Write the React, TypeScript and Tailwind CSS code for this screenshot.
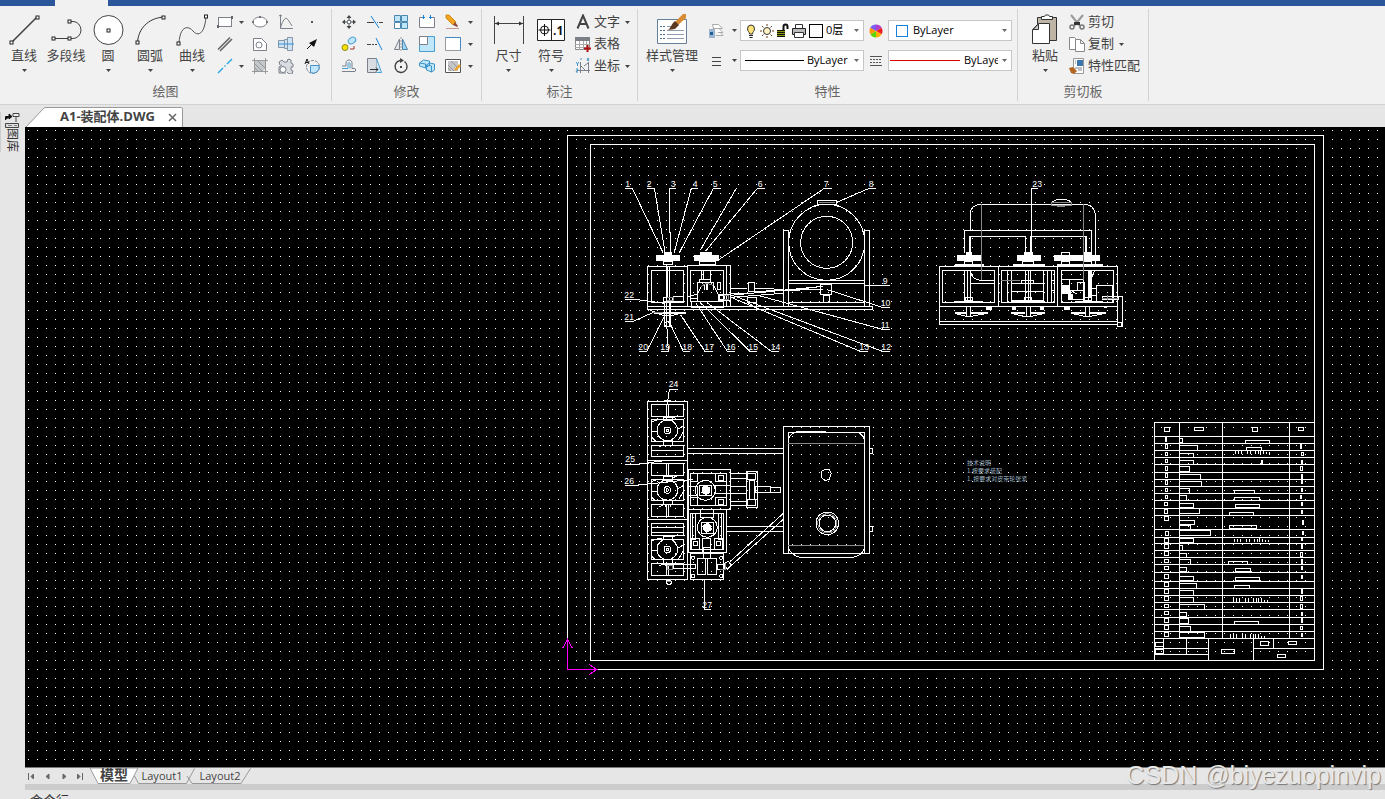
import { Fragment, type ReactNode } from "react";
import { clsx } from "clsx";

const UI_FONT = "font-['Open_Sans','Noto_Sans_CJK_SC',sans-serif]";

const GRID_STEP = 8.99;
const GRID_COLS = 220;
const GRID_ROWS = 120;

type Box = [x: number, y: number, w: number, h: number];
type Label = [text: string, x: number, y: number];

function Arrow({ className }: { className?: string }) {
  return (
    <svg viewBox="0 0 5 3" className={clsx("h-[3px] w-[5px] shrink-0", className)} aria-hidden>
      <path d="M0 0h5L2.5 3z" fill="#444" />
    </svg>
  );
}

function Node({ x, y }: { x: number; y: number }) {
  return <rect x={x - 1.5} y={y - 1.5} width="3" height="3" fill="#fff" stroke="#222" strokeWidth="1" />;
}

function Icon({ size = 16, children }: { size?: number; children: ReactNode }) {
  return (
    <svg
      width={size}
      height={size}
      viewBox={`0 0 ${size} ${size}`}
      fill="none"
      stroke="#7b808a"
      strokeWidth="1"
      className="shrink-0"
      aria-hidden
    >
      {children}
    </svg>
  );
}

type BigButtonProps = {
  label: string;
  icon: ReactNode;
  menu?: boolean;
  className: string;
};

function BigButton({ label, icon, menu = true, className }: BigButtonProps) {
  return (
    <button
      type="button"
      className={clsx("flex shrink-0 flex-col items-center pt-[3px] hover:bg-gray-200", className)}
    >
      <Icon size={32}>{icon}</Icon>
      <span className="text-[13px] leading-[18px] whitespace-nowrap">{label}</span>
      {menu && <Arrow className="mt-[5px]" />}
    </button>
  );
}

type Tool = { name: string; icon: ReactNode };

function ToolButton({ tool }: { tool: Tool }) {
  return (
    <button type="button" aria-label={tool.name} className="flex items-center justify-center hover:bg-gray-200">
      <Icon>{tool.icon}</Icon>
    </button>
  );
}

function MenuButton({ name }: { name: string }) {
  return (
    <button type="button" aria-label={name} className="flex items-center justify-center">
      <Arrow />
    </button>
  );
}

function TextButton({ tool, menu }: { tool: Tool; menu?: boolean }) {
  return (
    <button type="button" className="flex h-[22px] items-center gap-[3px] hover:bg-gray-200">
      <Icon>{tool.icon}</Icon>
      <span className="pb-0.5 text-[13px] leading-5 whitespace-nowrap">{tool.name}</span>
      {menu && <Arrow className="ml-0.5" />}
    </button>
  );
}

type GroupProps = { title: string; className: string; inset: string; children: ReactNode };

function Group({ title, className, inset, children }: GroupProps) {
  return (
    <section className={clsx("mt-[3px] flex h-[92px] shrink-0 flex-col border-r border-[#d2d2d2] pt-0.5", className)}>
      <div className={clsx("flex h-[66px]", inset)}>{children}</div>
      <h2 className="mt-1 text-center text-[13px] leading-5 text-[#666]">{title}</h2>
    </section>
  );
}

type ComboProps = { label: string; value: string; children?: ReactNode; gap: string };

function Combo({ label, value, children, gap }: ComboProps) {
  return (
    <div className={clsx("flex h-[21px] min-w-0 items-center border border-[#c6c6c6] bg-white pr-1", gap)}>
      {children}
      <select
        aria-label={label}
        defaultValue={value}
        className="h-full min-w-0 flex-1 appearance-none overflow-hidden text-[11px] text-black outline-none"
      >
        <option>{value}</option>
      </select>
      <Arrow className="ml-1 opacity-80" />
    </div>
  );
}

const TOOLS: Record<string, Tool> = {
  rect: {
    name: "矩形",
    icon: (
      <>
        <rect x="1.5" y="3.5" width="13" height="9" fill="#fff" />
        <path d="M0 11h2v3H0zM14 2h2v3h-2z" fill="#666" stroke="none" />
      </>
    ),
  },
  ellipse: {
    name: "椭圆",
    icon: (
      <>
        <ellipse cx="8" cy="8" rx="7" ry="5" fill="#fff" />
        <path d="M0 7h2v2H0zM14 7h2v2h-2zM7 2h2v2H7z" fill="#777" stroke="none" />
      </>
    ),
  },
  function: { name: "公式曲线", icon: <path d="M2.500 1v13.500H15M2.500 14C4 8 6 5 8 4c3 2 4 5 6 8M1 2l1.500-1L4 2" /> },
  point: { name: "点", icon: <path d="M7 7h2v2H7z" fill="#555" stroke="none" /> },
  parallel: { name: "平行线", icon: <path d="M1 13.500L13 1.500M3 15L15 3" strokeWidth="1.600" stroke="#666" /> },
  hole: {
    name: "孔",
    icon: (
      <>
        <path d="M1.500 2.500h8l5 5v7h-13z" fill="#fff" />
        <circle cx="7" cy="9" r="3" />
      </>
    ),
  },
  shaft: {
    name: "轴",
    icon: (
      <>
        <path d="M.5 4.500h6v-1h3v-2h5v13h-5v-2h-3v-1h-6zM6.500 4v8M9.500 3v10" fill="#cfe3f2" stroke="#8496a8" />
        <path d="M0 8h16" stroke="#3a94dc" />
      </>
    ),
  },
  leader: {
    name: "箭头",
    icon: (
      <>
        <path d="M3 13l7-7" stroke="#111" />
        <path d="M13 3l-3 8-5-4z" fill="#111" stroke="none" />
      </>
    ),
  },
  centerline: { name: "中心线", icon: <path d="M1 15L6 10M7.500 8.500l1-1M10 6l5-5" stroke="#22a5e0" strokeWidth="1.400" /> },
  hatch: {
    name: "剖面线",
    icon: (
      <>
        <path d="M3 3h11v7l-4 4H3z" fill="#c5c8cb" stroke="none" />
        <path d="M2.500 0v16M13.500 0v16M0 2.500h16M0 13.500h16M3 6l7 7M3 10l3 3M6 3l7 7" stroke="#888" strokeWidth="0.800" />
      </>
    ),
  },
  gear: {
    name: "齿轮",
    icon: (
      <>
        <path
          d="M2 7l-1-3 3-2 2 2h3l1-3 3 1v3l2 1v3h-2v3l2 1-1 3h-3l-2-2M8 15H1V9l3-2"
          fill="#d9dde2"
        />
        <circle cx="5" cy="11.500" r="3" fill="#fff" />
      </>
    ),
  },
  partial: {
    name: "局部放大",
    icon: (
      <>
        <circle cx="9" cy="9" r="6.500" strokeDasharray="3 1" />
        <path d="M6.500 7.500h8.500a6 6 0 0 1-8.500 7z" fill="#bfe6fa" stroke="#4a92c4" />
        <path d="M1 6l2-5 2 5M2 4.500h2" stroke="#111" />
      </>
    ),
  },
  move: {
    name: "移动",
    icon: (
      <>
        <rect x="6.500" y="6.500" width="3" height="3" fill="#fff" />
        <path d="M8 1l2.500 3h-5zM8 15l2.500-3h-5zM1 8l3-2.500v5zM15 8l-3-2.500v5z" fill="#444" stroke="none" />
        <path d="M8 3v3M8 10v3M3 8h3M10 8h3" stroke="#444" />
      </>
    ),
  },
  trim: {
    name: "裁剪",
    icon: (
      <>
        <path d="M0 8.500h7M12 8.500h4" stroke="#444" />
        <path d="M4 2l8 12" stroke="#1683d9" />
        <path d="M8 8.500h4" stroke="#1683d9" strokeDasharray="1 1" />
      </>
    ),
  },
  array: {
    name: "阵列",
    icon: (
      <g stroke="#4b87ae">
        <path d="M1.500 1.500h6v6h-6zM8.500 1.500h6v6h-6zM8.500 8.500h6v6h-6z" fill="#bfe6fa" />
        <path d="M1.500 8.500h6v6h-6z" fill="#fff" />
      </g>
    ),
  },
  breakAt: {
    name: "打断",
    icon: (
      <>
        <path d="M4 3.500H.5v10h15v-10H12" fill="#fff" />
        <path d="M4.500 1v4M11.500 1v4" stroke="#1683d9" />
        <path d="M3 3.500h3M10 3.500h3" stroke="#1683d9" />
      </>
    ),
  },
  erase: {
    name: "删除",
    icon: (
      <>
        <path d="M1 14.500h13" stroke="#c09a90" />
        <path d="M1 1l3 0 7 7-3 3-7-7z" fill="#f3a521" stroke="#d48a14" />
        <path d="M10 8l3 4-1 1-4-2z" fill="#8f4b3f" stroke="none" />
      </>
    ),
  },
  copy: {
    name: "平移复制",
    icon: (
      <>
        <ellipse cx="11" cy="4.500" rx="4" ry="3" fill="#bfe6fa" stroke="#4b9fd0" transform="rotate(-35 11 4.500)" />
        <circle cx="4" cy="11.500" r="3" fill="#fce100" stroke="#888a2a" />
        <path d="M9 13h4v-3" stroke="#a2342a" />
      </>
    ),
  },
  extend: {
    name: "延伸",
    icon: (
      <>
        <path d="M0 8.500h4" stroke="#444" />
        <path d="M5 8.500h6" stroke="#444" strokeDasharray="2 1" />
        <path d="M9 2l6 12" stroke="#1683d9" />
      </>
    ),
  },
  mirror: {
    name: "镜像",
    icon: (
      <>
        <path d="M6.500 3v10.500h-5z" fill="#e5e7ea" />
        <path d="M9.500 3v10.500h5z" fill="#9fd4f2" stroke="#4b87ae" />
        <path d="M8 1v14" stroke="#999" strokeDasharray="2 1" />
      </>
    ),
  },
  scale: {
    name: "缩放",
    icon: (
      <>
        <path d="M.5 .5h15v15h-15z" fill="#bfe6fa" stroke="#4b9fd0" />
        <path d="M.5 .5h8v8h-8z" fill="#fff" />
      </>
    ),
  },
  frame: {
    name: "边框",
    icon: (
      <>
        <path d="M.5 1.500h15v13H.5z" fill="#fff" stroke="#999" />
        <path d="M.5 1.500h15v13" stroke="#1683d9" strokeDasharray="2 1" />
      </>
    ),
  },
  offset: {
    name: "等距",
    icon: (
      <>
        <path d="M1 13.500h13q1.500-1.500 0-3h-3V5c0-4-6-4-6 0v3H1" />
        <path d="M1 10.500h6V6c0-2 2-2 2 0v4.500" stroke="#4b9fd0" />
      </>
    ),
  },
  stretch: {
    name: "拉伸",
    icon: (
      <>
        <path d="M.5 .5h9v14h-9z" fill="#d9dde2" />
        <path d="M9.500 .5l5 14h-5" fill="#d3ecfa" stroke="#4b9fd0" />
        <path d="M3 11.500h8M9 9.500l2 2-2 2" stroke="#333" />
      </>
    ),
  },
  rotate: {
    name: "旋转",
    icon: (
      <>
        <path d="M7 2.500a6 6 0 1 0 4.500 1" stroke="#444" strokeWidth="1.400" />
        <path d="M7 0v5l4-2.500z" fill="#444" stroke="none" />
        <path d="M7 8h2v2H7z" fill="#444" stroke="none" />
      </>
    ),
  },
  solid: {
    name: "拉伸体",
    icon: (
      <g stroke="#3e93c6" fill="#bfe6fa">
        <path d="M.5 5l4-3 6 1v4l-4 3-6-2zM7.500 7l3-2 5 1v6l-3 2-5-2zM7.500 7l5 1v6M.5 5l6 1v4" />
      </g>
    ),
  },
  editHatch: {
    name: "编辑剖面线",
    icon: (
      <>
        <path d="M.5 1.500h15v13H.5z" fill="#fff" stroke="#555" />
        <path d="M3 3h10v10H3z" fill="#c3c5c8" stroke="none" />
        <path d="M3 7l6 6M6 3l7 7M3 10l3 3" stroke="#999" />
        <path d="M9 12l5-6 2 2-5 5z" fill="#e9a52c" stroke="none" />
      </>
    ),
  },
  text: { name: "文字", icon: <path d="M2.500 14.500L8 1.500l5.500 13M4.500 10h7" stroke="#444" strokeWidth="2" /> },
  table: {
    name: "表格",
    icon: (
      <>
        <path d="M.5 1.500h14v12H.5z" fill="#fff" stroke="#888" />
        <path d="M0 1h15v4H0z" fill="#7c7f86" stroke="none" />
        <path d="M4.500 5v9M8.500 5v9M11.500 5v9M0 8.500h15M0 11.500h15" stroke="#aaa" />
        <path d="M12.500 9v7M9 12.500h7" stroke="#b01010" strokeWidth="2" />
      </>
    ),
  },
  coord: {
    name: "坐标",
    icon: (
      <>
        <path d="M5.500 4v11M2 12.500h13M6 8l4 4M13.500 4v11M9 8l4-3" />
        <path d="M1 4l1.500 2L4 4M2.500 6v2M12 0l2 3M14 0l-2 3M1 11h2l-2 3h2M5 1h2" stroke="#3e93c6" />
      </>
    ),
  },
  cut: {
    name: "剪切",
    icon: (
      <>
        <path d="M2 1l9 11M14 1L5 12" stroke="#999" strokeWidth="2" />
        <path d="M5 8h6v3H5z" fill="#333" stroke="none" />
        <circle cx="3" cy="13" r="2" stroke="#777" strokeWidth="1.500" />
        <circle cx="13" cy="13" r="2" stroke="#777" strokeWidth="1.500" />
      </>
    ),
  },
  duplicate: {
    name: "复制",
    icon: (
      <>
        <path d="M.5 1.500h5l3 3v9h-8z" fill="#fff" stroke="#888" />
        <path d="M6.500 3.500h5l4 4v8h-9zM11.500 3.500v4h4" fill="#fff" stroke="#888" />
      </>
    ),
  },
  match: {
    name: "特性匹配",
    icon: (
      <>
        <path d="M4.500.5h10v15h-10z" fill="#fff" stroke="#999" />
        <path d="M8 2h6v6H8z" fill="#3b77ad" stroke="none" />
        <path d="M6 3h1M6 5h1M6 10h7M9 12h4" />
        <path d="M0 10l4-1 4 4-3 3-3-1z" fill="#b2651e" stroke="none" />
      </>
    ),
  },
};

const DRAW_ROWS: [string, boolean, string, string, string][] = [
  ["rect", true, "ellipse", "function", "point"],
  ["parallel", false, "hole", "shaft", "leader"],
  ["centerline", true, "hatch", "gear", "partial"],
];

const MODIFY_ROWS = [
  ["move", "trim", "array", "breakAt", "erase"],
  ["copy", "extend", "mirror", "scale", "frame"],
  ["offset", "stretch", "rotate", "solid", "editHatch"],
];

function Ribbon() {
  return (
    <header className="flex h-[99px] shrink-0 overflow-hidden border-b border-[#d2d2d2] bg-[#f1f1f1] text-[#444]">
      <Group title="绘图" className="w-[332px]" inset="pl-[3px]">
        <BigButton
          label="直线"
          className="w-[42px]"
          icon={
            <>
              <path d="M3 29L29 3" stroke="#444" strokeWidth="1.600" />
              <Node x={3.5} y={28.5} />
              <Node x={29.5} y={3.5} />
            </>
          }
        />
        <BigButton
          label="多段线"
          menu={false}
          className="w-[42px]"
          icon={
            <>
              <path d="M3 24.500h20a8 8.500 0 0 0 0-17h-4" stroke="#444" />
              <Node x={19.5} y={7.5} />
              <Node x={3.5} y={24.5} />
              <Node x={19.5} y={24.5} />
            </>
          }
        />
        <BigButton
          label="圆"
          className="w-[42px]"
          icon={
            <>
              <circle cx="16.500" cy="16" r="14.500" fill="#fff" stroke="#444" />
              <Node x={16.5} y={16.5} />
            </>
          }
        />
        <BigButton
          label="圆弧"
          className="w-[42px]"
          icon={
            <>
              <path d="M3.500 29C4 15 14 4 30 3" stroke="#333" />
              <Node x={3.5} y={28.5} />
              <Node x={29.5} y={3.5} />
            </>
          }
        />
        <BigButton
          label="曲线"
          className="w-[42px]"
          icon={
            <>
              <path d="M3 29C4 12 12 11 17 17s12 3 13-15" stroke="#555" />
              <Node x={2.5} y={29.5} />
              <Node x={30} y={2.5} />
            </>
          }
        />
        <div className="ml-px grid grid-cols-[22px_11px_26px_26px_26px] grid-rows-3">
          {DRAW_ROWS.map(([first, menu, ...rest]) => (
            <Fragment key={first}>
              <ToolButton tool={TOOLS[first]} />
              {menu ? <MenuButton name={`${TOOLS[first].name}菜单`} /> : <span />}
              {rest.map((id) => (
                <ToolButton key={id} tool={TOOLS[id]} />
              ))}
            </Fragment>
          ))}
        </div>
      </Group>

      <Group title="修改" className="w-[150px]" inset="pl-1">
        <div className="grid grid-cols-[26px_26px_26px_26px_26px_9px] grid-rows-3">
          {MODIFY_ROWS.map((row) => (
            <Fragment key={row[0]}>
              {row.map((id) => (
                <ToolButton key={id} tool={TOOLS[id]} />
              ))}
              <MenuButton name={`${TOOLS[row[4]].name}菜单`} />
            </Fragment>
          ))}
        </div>
      </Group>

      <Group title="标注" className="w-[156px]" inset="pl-[5px]">
        <BigButton
          label="尺寸"
          className="w-[43px]"
          icon={
            <g stroke="#444">
              <path d="M1.500 2v28M30.500 2v28M2 9.500h28" />
              <path d="M2 9.500l4-2v4zM30 9.500l-4-2v4z" fill="#333" stroke="none" />
            </g>
          }
        />
        <BigButton
          label="符号"
          className="w-[42px]"
          icon={
            <>
              <path d="M2.500 5.500h27v21h-27zM16.500 5v22" fill="#fff" stroke="#222" />
              <circle cx="9.500" cy="16" r="4" stroke="#111" />
              <path d="M9.500 10v12M3.500 16h12" stroke="#111" />
              <text x="18" y="21" fontSize="12" fontWeight="700" fill="#111" stroke="none" className={UI_FONT}>
                .1
              </text>
            </>
          }
        />
        <div className="ml-[3px] flex flex-col">
          <TextButton tool={TOOLS.text} menu />
          <TextButton tool={TOOLS.table} />
          <TextButton tool={TOOLS.coord} menu />
        </div>
      </Group>

      <Group title="特性" className="w-[380px]" inset="pl-[3px]">
        <BigButton
          label="样式管理"
          className="w-[62px]"
          icon={
            <>
              <path d="M1.500 5.500h29v24h-29z" fill="#fff" stroke="#667f99" />
              <path d="M4 12.500h5M4 16.500h5M4 20.500h5M4 24.500h5" stroke="#4e6c90" strokeDasharray="2 1" />
              <path d="M11 12.500h6M11 16.500h17M11 20.500h17M11 24.500h17" stroke="#8d9cae" />
              <path d="M27 0h3v4l-8 7-3-3z" fill="#d98b34" stroke="none" />
              <path d="M19 7l4 4-4 4-7 1c3-2 3-6 7-9z" fill="#5c3a22" stroke="none" />
            </>
          }
        />
        <div className="grid flex-1 grid-cols-[26px_11px_1fr_24px_1fr] grid-rows-[21px_21px] gap-y-[9px] pt-[9px] pr-[5px]">
          <ToolButton
            tool={{
              name: "图层",
              icon: (
                <>
                  <path d="M5.500 5.500l-1-4h6l4 4h-5M6 8.500l-1-3h6l4 4h-5M8 12.500h7l-3-3" fill="#fff" stroke="#aaa" />
                  <path d="M1 6h6v9H1z" fill="#9db6cd" stroke="none" />
                  <path d="M2 9h3v3H2z" fill="#1e5f9a" stroke="none" />
                </>
              ),
            }}
          />
          <MenuButton name="图层菜单" />
          <Combo label="图层" value="0层" gap="pl-[2px]">
            <Icon>
              <path d="M4.500 6a3.500 4 0 0 1 7 0c0 2-2 3-2 5h-3c0-2-2-3-2-5z" fill="#ffe27a" stroke="#333" />
              <path d="M6 12.500h4M6.500 14.500h3" stroke="#222" />
            </Icon>
            <Icon>
              <circle cx="8" cy="8" r="3.500" fill="#fff3c4" stroke="#333" />
              <path d="M8 1v2M8 13v2M1 8h2M13 8h2M3 3l1.500 1.500M11.500 11.500L13 13M3 13l1.500-1.500M11.500 4.500L13 3" stroke="#6b3d12" />
            </Icon>
            <Icon>
              <path d="M2 7h8v7H2z" fill="#8a9800" stroke="none" />
              <path d="M2 7.500h8M2 9.500h8M2 11.500h8M2 13.500h8" stroke="#111" />
              <path d="M8.500 7V3.500q0-2 2-2t2 2V6" stroke="#111" strokeWidth="2" />
            </Icon>
            <Icon>
              <path d="M4.500 6V1.500h7V6" fill="#fff" stroke="#333" />
              <path d="M1.500 5.500h13v6h-13z" fill="#bbb" stroke="#222" />
              <path d="M3.500 9.500h9v5h-9z" fill="#fff" stroke="#333" />
            </Icon>
            <span className="mr-[3px] ml-0.5 size-3.5 shrink-0 border border-black" />
          </Combo>
          <button type="button" aria-label="颜色" className="flex items-center justify-center">
            <Icon>
              <g stroke="none">
                <path d="M8 8V1.500A6.500 6.500 0 0 1 13.600 4.750z" fill="#b23fc9" />
                <path d="M8 8L13.600 4.750a6.500 6.500 0 0 1 0 6.500z" fill="#ee1c24" />
                <path d="M8 8l5.600 3.250A6.500 6.500 0 0 1 8 14.500z" fill="#ffb000" />
                <path d="M8 8v6.500a6.500 6.500 0 0 1-5.600-3.250z" fill="#5bd600" />
                <path d="M8 8L2.400 11.250a6.500 6.500 0 0 1 0-6.500z" fill="#ff9500" />
                <path d="M8 8L2.400 4.750A6.500 6.500 0 0 1 8 1.500z" fill="#7a5cf0" />
              </g>
            </Icon>
          </button>
          <Combo label="颜色" value="ByLayer" gap="pl-[7px]">
            <span className="mr-[5px] size-3 shrink-0 border border-[#1580d8]" />
          </Combo>

          <ToolButton
            tool={{ name: "线宽", icon: <path d="M4 4.500h9M4 8.500h9M4 12.500h9" stroke="#444" /> }}
          />
          <MenuButton name="线宽菜单" />
          <Combo label="线宽" value="ByLayer" gap="pl-1">
            <span className="mr-[3px] h-px w-[59px] shrink-0 bg-black" />
          </Combo>
          <ToolButton
            tool={{
              name: "线型",
              icon: (
                <>
                  <path d="M2 3.500h12M2 12.500h12" stroke="#555" />
                  <path d="M2 6.500h12M2 9.500h12" stroke="#555" strokeDasharray="2 1" />
                </>
              ),
            }}
          />
          <Combo label="线型" value="ByLayer" gap="pl-px">
            <span className="mr-1 h-px w-[70px] shrink-0 bg-[#e00000]" />
          </Combo>
        </div>
      </Group>

      <Group title="剪切板" className="w-[131px]" inset="pl-1.5">
        <BigButton
          label="粘贴"
          className="w-[42px]"
          icon={
            <>
              <path d="M8.500 3.500h19v23h-19z" fill="#bfb5a6" stroke="#333" />
              <path d="M12.500 5.500v-3h3l1-1.500h3l1 1.500h3v3z" fill="#fff" stroke="#333" />
              <path d="M3.500 15.500l6-6h11v20h-17z" fill="#fff" stroke="#333" />
              <path d="M4 15.500h5.500V10z" fill="#ccc" stroke="#333" />
            </>
          }
        />
        <div className="ml-[3px] flex flex-col items-start">
          <TextButton tool={TOOLS.cut} />
          <TextButton tool={TOOLS.duplicate} menu />
          <TextButton tool={TOOLS.match} />
        </div>
      </Group>
    </header>
  );
}

// ---- drawing ----

function gridPath() {
  let d = "";
  for (let r = 0; r < GRID_ROWS; r++) {
    for (let c = 0; c < GRID_COLS; c++) {
      d += `M${Math.round(3 + c * GRID_STEP)} ${Math.round(3 + r * GRID_STEP)}h1v1h-1z`;
    }
  }
  return d;
}

const GRID_PATH = gridPath();

// Every view is drawn in its own space, three units to the pixel.
function View({ x, y, children }: { x: number; y: number; children: ReactNode }) {
  return (
    <g transform={`translate(${x - 25} ${y - 127}) scale(${1 / 3})`} strokeWidth="3">
      {children}
    </g>
  );
}

function Boxes({ items, fill = "none" }: { items: Box[]; fill?: string }) {
  return (
    <>
      {items.map(([x, y, w, h], i) => (
        <rect key={i} x={x} y={y} width={w} height={h} fill={fill} />
      ))}
    </>
  );
}

function Labels({ items }: { items: Label[] }) {
  return (
    <g fill="#fff" stroke="none" fontSize="26" className="font-['Liberation_Sans',sans-serif]">
      {items.map(([text, x, y]) => (
        <text key={text} x={x} y={y}>
          {text}
        </text>
      ))}
    </g>
  );
}

const FRONT_LABELS: Label[] = [
  ["1", 46, 66], ["2", 110, 66], ["3", 182, 66], ["4", 248, 66], ["5", 308, 66],
  ["6", 443, 66], ["7", 641, 66], ["8", 776, 66], ["9", 818, 356], ["10", 812, 422],
  ["11", 812, 490], ["12", 814, 556], ["13", 748, 556], ["14", 482, 556], ["15", 415, 556],
  ["16", 348, 556], ["17", 283, 556], ["18", 217, 556], ["19", 151, 556], ["20", 85, 556],
  ["21", 43, 466], ["22", 43, 399],
];

function FrontView() {
  return (
    <View x={610} y={165}>
      <path
        d="M46 70H67L160 265M112 70H133L165 260M199 70H178L181 265M265 70H244L192 265M334 70H310L207 265
           M379 70L271 255M466 70H442L287 258M667 70H643L325 285M799 70H778L680 112M841 361H765
           M841 427H817L652 374M841 493H817L440 390M841 559H817L370 392M775 559H751L370 400
           M508 559H484L290 412M442 559H420L270 412M376 559H352L258 415M310 559H285L212 450
           M241 559H220L180 475M154 559H175L170 475M88 559H110L163 455M46 469H70L130 442M46 403H76L165 415"
      />
      <Boxes
        fill="#fff"
        items={[[138, 271, 69, 16], [252, 271, 72, 16], [163, 262, 21, 8], [270, 262, 34, 8], [133, 441, 93, 3]]}
      />
      <Boxes
        items={[
          [160, 290, 27, 9], [268, 290, 48, 9],
          [112, 303, 121, 121], [124, 316, 97, 96], [233, 301, 128, 122], [241, 316, 100, 93],
          [520, 196, 15, 227], [763, 196, 15, 227], [535, 346, 228, 9], [535, 355, 228, 57],
          [622, 106, 58, 12], [415, 352, 18, 27], [412, 397, 27, 15], [268, 343, 34, 9],
          [325, 388, 36, 18], [160, 397, 27, 12], [631, 358, 33, 30], [640, 391, 18, 21],
          [328, 391, 15, 12], [244, 409, 96, 18], [322, 352, 10, 22],
        ]}
      />
      <path
        d="M112 424H787V433H112ZM168 303V478M178 303V478M349 303V423M163 409V484H182V409
           M172 303V397M274 316V343M280 316V343M301 316V343M262 352V409M190 394H220V409H190
           M262 409V388L274 364L289 355L310 361L325 388M262 352H310V376M289 355V376M283 358V376M292 358V376
           M361 370H412M433 370L520 373M361 385H412M361 391L640 364M433 379L640 373M361 397L520 385M535 376L640 364
           M412 412L430 424M439 412V424M115 433L160 452H185L226 441M235 394L262 388M241 400H262M625 118L610 124M677 118L690 124"
      />
      <circle cx="650" cy="232" r="114" />
      <circle cx="650" cy="232" r="78" />
      <circle cx="172" cy="478" r="8" />
      <path d="M628 112H676M172 397H190V405H172M274 364L289 355L310 361M343 391H355V403H343M130 441H160" stroke="#888" />
      <Labels items={FRONT_LABELS} />
    </View>
  );
}

function SideView() {
  return (
    <View x={920} y={165}>
      <path
        d="M355 70H334V262M151 196V142Q154 121 181 118H496Q523 121 526 148V300M133 265V196H514V265
           M148 265V214H316V265M334 214H496V265M151 214V265M331 214V265M499 214V265M394 118Q397 103 425 103T455 118
           M58 303H592V424H58ZM235 303V424M412 303V424M58 412V481M58 469H592M58 478H592M592 424V481
           M592 394H607V484H592ZM151 319Q157 346 184 346H223M151 355H223M523 319L514 340"
      />
      <Boxes
        fill="#fff"
        items={[
          [111, 271, 69, 16], [291, 271, 69, 16], [402, 271, 135, 16], [139, 262, 15, 8], [313, 262, 25, 8],
          [493, 262, 20, 8], [105, 299, 84, 2], [280, 299, 94, 2], [412, 299, 135, 2], [505, 319, 9, 78],
          [427, 361, 21, 24], [274, 406, 96, 4], [445, 388, 12, 15],
          [106, 442, 34, 4], [155, 442, 46, 4], [274, 442, 40, 4], [333, 442, 40, 4], [455, 442, 38, 4], [511, 442, 44, 4],
          [199, 427, 15, 6], [277, 427, 8, 5], [361, 427, 8, 5], [433, 427, 15, 5], [553, 425, 6, 3],
        ]}
      />
      <Boxes
        items={[
          [424, 262, 24, 8], [133, 290, 25, 9], [307, 290, 34, 9], [424, 290, 24, 9], [490, 290, 24, 9],
          [67, 316, 157, 96], [244, 316, 160, 96], [424, 316, 157, 96], [133, 316, 18, 90], [136, 397, 21, 9],
          [316, 316, 16, 90], [313, 397, 21, 9], [493, 397, 21, 9], [262, 316, 12, 96], [370, 316, 12, 96],
          [274, 355, 96, 24], [490, 316, 15, 90], [529, 361, 49, 51], [472, 352, 21, 24], [304, 346, 36, 9],
          [140, 424, 12, 30], [318, 424, 12, 30], [496, 424, 12, 30], [451, 376, 42, 27], [514, 370, 15, 21],
          [547, 394, 48, 9], [592, 472, 12, 12],
        ]}
      />
      <path
        d="M142 316V406M325 316V406M394 316V412M397 346H404M397 376H404M427 343H490M514 391H529M448 346V361M457 379L472 388M106 409H190M283 409H370M466 409H550
           M104 445L138 454H155L201 445M272 445L312 454H334L374 445M453 445L494 454H511L557 445"
      />
      <path d="M184 118V346M490 118V346M244 346H301M394 112H455V121H394ZM412 124H436M547 400H595M562 391V406" stroke="#888" />
      <Labels items={[["23", 337, 66]]} />
    </View>
  );
}

function Fan({ cy }: { cy: number }) {
  return (
    <g>
      <circle cx="172" cy={cy} r="31" />
      <circle cx="172" cy={cy} r="10" />
      <circle cx="172" cy={cy} r="4" />
      <rect x="160" y={cy - 40} width="27" height="10" />
      <rect x="160" y={cy + 30} width="27" height="14" />
      <path
        d={`M124 ${cy + 3}H141M203 ${cy - 3}L221 ${cy - 14}M124 ${cy - 25}Q142 ${cy - 34} 157 ${cy - 32}M124 ${cy + 20}L136 ${cy + 32}M221 ${cy + 3}L206 ${cy + 28}`}
      />
      <path d={`M148 ${cy + 50}L160 ${cy + 44}M187 ${cy - 36}L205 ${cy - 44}M166 ${cy + 44}V${cy + 50}M181 ${cy + 44}V${cy + 50}`} />
    </g>
  );
}

function TopView() {
  return (
    <View x={610} y={370}>
      <path
        d="M205 58H178L172 103M46 283H82L170 271M46 346H76L250 328M303 718H283V628M163 92H184
           M112 271H233M112 448H233M169 103V139M175 103V139M169 280V316M175 280V316M169 403V439M175 403V439M169 580V616M175 580V616
           M124 241H221M124 472H221M124 486H221M233 235H520M233 250H520M349 469H520M349 484H520"
      />
      <Boxes
        items={[
          [112, 94, 121, 534], [124, 103, 97, 36], [124, 148, 97, 66], [124, 226, 97, 33], [124, 280, 97, 36],
          [124, 328, 97, 63], [124, 403, 97, 36], [124, 460, 97, 36], [124, 508, 97, 60], [124, 580, 97, 36],
          [190, 583, 66, 12], [520, 169, 258, 381], [535, 187, 228, 363], [778, 235, 9, 15], [778, 469, 9, 15],
          [235, 298, 126, 120], [241, 310, 108, 96], [241, 310, 21, 24], [241, 382, 21, 24], [316, 310, 33, 24],
          [316, 382, 33, 24], [325, 316, 15, 15], [325, 388, 15, 15], [235, 349, 27, 27], [316, 346, 45, 24],
          [361, 310, 48, 15], [361, 349, 48, 21], [361, 394, 48, 12], [409, 304, 33, 108], [412, 310, 24, 18],
          [412, 388, 24, 18], [418, 331, 15, 57], [436, 349, 45, 18], [481, 352, 30, 15],
          [235, 418, 114, 129], [241, 430, 99, 108], [247, 430, 10, 78], [325, 430, 9, 78], [244, 505, 24, 33],
          [313, 505, 24, 33], [250, 514, 12, 12], [319, 514, 12, 12], [271, 418, 39, 24], [277, 505, 24, 42],
          [241, 550, 99, 78], [262, 565, 24, 48], [292, 565, 27, 48], [280, 532, 21, 33], [322, 583, 21, 15],
        ]}
      />
      <path
        d="M277 352L286 348L298 352L300 368L288 374L276 368ZM282 465L292 460L302 466L304 480L290 486L280 478Z"
        fill="#fff"
      />
      <path
        d="M535 208Q542 190 559 187M763 208Q757 190 739 187M535 535Q544 556 571 562H730Q757 556 763 535M559 184H648
           M361 574L520 430M364 586L520 448M343 580L355 574L364 586L352 598ZM268 345H305V376H268ZM275 457H310V490H275Z"
      />
      <Fan cy={181} />
      <Fan cy={360} />
      <Fan cy={538} />
      <circle cx="286" cy="361" r="30" />
      <circle cx="292" cy="472" r="30" />
      <path d="M635 304L645 298H658L664 310L658 328L646 332L634 323Z" />
      <circle cx="652" cy="460" r="34" />
      <circle cx="652" cy="460" r="25" />
      <circle cx="652" cy="460" r="29" stroke="#888" />
      {[[249, 563], [334, 563], [249, 618], [334, 618]].map(([cx, cy]) => (
        <circle key={`${cx}-${cy}`} cx={cx} cy={cy} r="5" />
      ))}
      <circle cx="177" cy="637" r="7" />
      <path d="M535 220H763M535 526H763M172 586H187V598H172ZM345 580V598H330M170 634H184" stroke="#888" />
      <Labels items={[["24", 176, 52], ["25", 46, 277], ["26", 43, 343], ["27", 277, 714]]} />
    </View>
  );
}

const ROW_LINES = [
  79, 100, 121, 142, 163, 187, 208, 229, 250, 271, 295, 316, 358, 382, 400, 421, 442, 463, 487, 514, 535, 556, 577,
  598, 622, 643, 664, 685,
];

const TABLE_BOXES: Box[] = [
  [73, 52, 16, 13], [163, 52, 28, 10], [337, 52, 16, 13], [475, 52, 16, 10],
  // serial numbers
  [77, 82, 3, 12], [77, 103, 6, 12], [77, 127, 6, 10], [77, 148, 6, 10], [77, 169, 6, 12], [77, 190, 6, 13],
  [77, 211, 6, 12], [77, 235, 6, 10], [77, 256, 6, 10], [73, 277, 10, 10], [73, 298, 10, 12], [73, 319, 13, 12],
  [77, 364, 9, 12], [73, 385, 13, 12], [73, 403, 13, 12], [73, 424, 13, 13], [73, 448, 13, 10], [73, 469, 13, 10],
  [73, 493, 13, 13], [73, 517, 13, 12], [73, 538, 13, 12], [73, 559, 13, 12], [73, 583, 13, 10], [73, 604, 13, 10],
  [73, 625, 13, 12], [73, 646, 13, 12], [73, 667, 13, 12],
  // names
  [118, 85, 9, 12], [118, 106, 55, 15], [118, 130, 42, 12], [118, 151, 42, 12], [118, 169, 31, 15], [118, 193, 64, 15],
  [118, 214, 66, 15], [118, 235, 31, 15], [118, 256, 22, 15], [118, 280, 42, 12], [118, 295, 61, 15], [118, 331, 46, 12],
  [118, 346, 33, 12], [118, 361, 94, 15], [118, 385, 42, 12], [118, 406, 9, 15], [118, 430, 22, 12], [118, 448, 33, 15],
  [118, 472, 22, 12], [118, 499, 42, 12], [118, 520, 52, 15], [118, 541, 42, 15], [118, 562, 42, 15], [118, 583, 76, 15],
  [118, 607, 22, 12], [118, 625, 28, 15], [118, 649, 33, 15], [118, 667, 76, 15],
  // codes
  [316, 91, 73, 9], [319, 112, 46, 9], [283, 241, 61, 9], [283, 262, 76, 9], [286, 283, 73, 9], [268, 307, 73, 9],
  [268, 346, 82, 9], [265, 454, 58, 9], [286, 475, 46, 10], [286, 502, 73, 10], [283, 526, 46, 9], [283, 634, 73, 9],
  // quantities
  [484, 127, 6, 9], [481, 169, 6, 12], [481, 427, 6, 12], [481, 559, 6, 12], [481, 583, 6, 12], [481, 649, 6, 9],
  // title block
  [46, 697, 24, 12], [46, 718, 24, 12], [244, 718, 40, 12], [361, 694, 25, 12], [445, 694, 25, 9], [412, 733, 25, 9],
];

const TABLE_MARKS: Box[] = [
  [480, 102, 6, 14], [483, 151, 6, 11], [483, 193, 6, 30], [483, 235, 6, 10], [480, 256, 6, 10], [483, 277, 6, 10],
  [483, 301, 6, 10], [486, 331, 6, 13], [486, 364, 6, 10], [483, 384, 6, 8], [483, 402, 6, 14], [483, 447, 6, 14],
  [483, 469, 6, 10], [483, 496, 6, 10], [483, 538, 6, 13], [483, 607, 6, 10], [483, 625, 6, 13], [483, 670, 6, 10],
  [363, 151, 6, 11],
];

// left end and bottom of the tick strips in the code column
const TICK_ROWS = [
  [286, 133], [283, 397], [280, 575], [271, 683],
];

function PartsList() {
  return (
    <View x={1140} y={410}>
      <path
        d={`M43 751V37H523M118 37V685M247 37V685M448 37V685${ROW_LINES.map((y) => `M43 ${y}H523`).join("")}
            M70 685V733M139 685V733M205 685V751M340 685V751M400 685V715M43 715H205M340 715H523M43 733H205`}
      />
      <Boxes items={TABLE_BOXES} />
      <g stroke="none">
        <Boxes items={TABLE_MARKS} fill="#fff" />
      </g>
      <path
        d={TICK_ROWS.map(([x, y]) =>
          [0, 10, 18, 36, 45, 60, 69, 76, 84, 92, 102].map((dx, i) => `M${x + dx} ${y}v-${i === 7 ? 12 : i > 8 ? 6 : 10}`).join(""),
        ).join("")}
      />
    </View>
  );
}

function Canvas() {
  return (
    <main className="min-h-0 flex-1 bg-black">
      <svg className="block size-full" fill="none" stroke="#fff" shapeRendering="crispEdges" role="img" aria-label="A1-装配体">
        <path d={GRID_PATH} fill="#fff" stroke="none" />
        <path d="M542.500 8.500h756v534h-756zM565.500 17.500h724v516h-724z" />
        <path d="M542.500 513V542.500H572M537.500 521.500l5-9 5 9M564 537.500l8 5-8 5" stroke="#f0f" />
        <FrontView />
        <SideView />
        <TopView />
        <PartsList />
        <g fill="#9fb4c4" stroke="none" fontSize="6" className="font-['Noto_Sans_CJK_SC',sans-serif]">
          <text x="942" y="338">技术说明</text>
          <text x="942" y="346">1.按要求装配</text>
          <text x="942" y="354">1. 按要求对皮带轮张紧</text>
        </g>
      </svg>
    </main>
  );
}

const NAV_BUTTONS = [
  { name: "第一页", d: "M1.500 1v7M6.500 2v5L4 4.500z" },
  { name: "上一页", d: "M6 2v5L3 4.500z" },
  { name: "下一页", d: "M4 2v5l3-2.500z" },
  { name: "最后一页", d: "M2.500 2v5L5 4.500zM7.500 1v7" },
];

function LayoutTabs() {
  return (
    <nav className="flex h-[17px] shrink-0 border-t border-[#777]">
      {NAV_BUTTONS.map((b) => (
        <button key={b.name} type="button" aria-label={b.name} className="flex w-4 items-center pl-0.5">
          <svg width="9" height="9" viewBox="0 0 9 9" fill="#666" stroke="#666" strokeWidth="1" aria-hidden>
            <path d={b.d} />
          </svg>
        </button>
      ))}
      <div className="relative ml-px flex items-center text-[11px] leading-4 text-[#444]">
        <svg width="164" height="16" viewBox="0 0 164 16" className="absolute top-0 left-0" fill="none" stroke="#999" aria-hidden>
          <path d="M0 0h48l-8 15.500H8z" fill="#fff" />
          <path d="M44.500 8l4 7.500h48l8-15M97 8l5 7.500h49l9.500-15" />
        </svg>
        <button type="button" className="relative w-12 pb-0.5 text-[14px] font-bold">模型</button>
        <button type="button" className="relative w-12 text-center">Layout1</button>
        <button type="button" className="relative ml-2 w-[52px] text-center">Layout2</button>
      </div>
    </nav>
  );
}

export default function App() {
  return (
    <div className={clsx("relative flex h-screen flex-col overflow-hidden bg-[#e6e6e6]", UI_FONT)}>
      <div className="flex h-1.5 shrink-0 bg-[#2b579a] pl-[55px]">
        <div className="w-[53px] bg-[#f1f1f1]" />
      </div>
      <Ribbon />
      <div className="flex min-h-0 flex-1">
        <aside className="w-[25px] shrink-0 pt-[7px]">
          <button type="button" className="flex w-full flex-col items-center border-l border-[#ccc] pr-0.5">
            <Icon>
              <path d="M1.500 8V4.500h5M5 2l3 2.500L5 7z" fill="#111" stroke="#111" />
              <path d="M9 1.500h6v3H9zM12 5v5" fill="#eee" stroke="#444" />
              <path d="M1.500 11.500h13v4h-13z" fill="#ddd" stroke="#444" />
              <path d="M4 13.500h4M10 13.500h3" />
            </Icon>
            <span className="text-[12px] leading-4 text-[#333] [text-orientation:sideways] [writing-mode:vertical-rl]">
              图库
            </span>
          </button>
        </aside>
        <div className="flex min-w-0 flex-1 flex-col">
          <div className="flex h-[22px] shrink-0 items-end">
            <div className="relative flex h-5 w-[158px] items-center pl-[35px] text-[13px] font-bold text-[#444]">
              <svg width="159" height="20" viewBox="0 0 159 20" className="absolute top-0 left-0" aria-hidden>
                <path d="M1 20L19 1Q20 .5 21 .5H156.500Q157.500 .5 157.500 2V20" fill="#fff" stroke="#999" />
              </svg>
              <span className="relative whitespace-nowrap">A1-装配体.DWG</span>
              <button type="button" aria-label="关闭" className="relative mr-1.5 ml-auto">
                <svg width="9" height="9" viewBox="0 0 9 9" stroke="#666" strokeWidth="1.500" aria-hidden>
                  <path d="M1 1l7 7M8 1L1 8" />
                </svg>
              </button>
            </div>
          </div>
          <Canvas />
          <LayoutTabs />
          <div className="h-1.5 shrink-0 bg-[#ccc]" />
          <div className="h-[9px] shrink-0 overflow-hidden pt-[3px] pl-[5px] text-[13px] leading-[15px] text-[#333]">
            命令行
          </div>
        </div>
      </div>
      <p className="pointer-events-none absolute right-1 bottom-2 font-['Liberation_Sans',sans-serif] text-[25px] leading-8 text-[#e8e8e8] [text-shadow:1px_1px_1px_#777]">
        CSDN @biyezuopinvip
      </p>
    </div>
  );
}
